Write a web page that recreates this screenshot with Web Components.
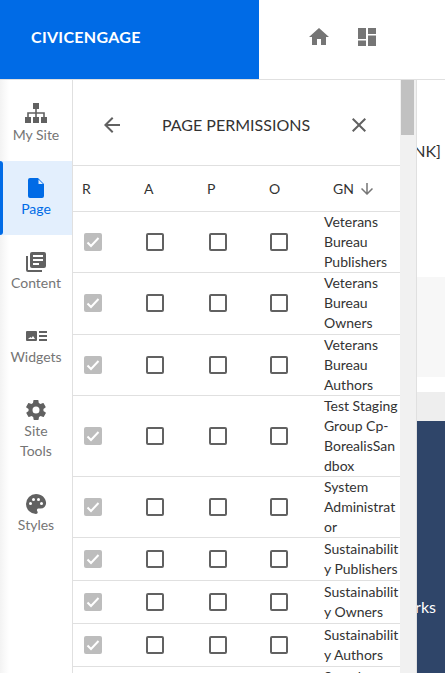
<!DOCTYPE html>
<html>
<head>
<meta charset="utf-8">
<style>
html,body{margin:0;height:100%;overflow:hidden;background:#fff}
body{font-family:"Lato","Open Sans",sans-serif;color:#333}
</style>
</head>
<body>
<app-shell>
  <top-bar slot="top"></top-bar>
  <side-nav slot="nav">
    <nav-item icon="sitemap">My Site</nav-item>
    <nav-item icon="page" active>Page</nav-item>
    <nav-item icon="content">Content</nav-item>
    <nav-item icon="widgets">Widgets</nav-item>
    <nav-item icon="tools">Site<br>Tools</nav-item>
    <nav-item icon="palette">Styles</nav-item>
  </side-nav>
  <permissions-panel slot="panel">
    <perm-row>Veterans<br>Bureau<br>Publishers</perm-row>
    <perm-row>Veterans<br>Bureau<br>Owners</perm-row>
    <perm-row>Veterans<br>Bureau<br>Authors</perm-row>
    <perm-row>Test Staging<br>Group Cp-<br>BorealisSan<br>dbox</perm-row>
    <perm-row>System<br>Administrat<br>or</perm-row>
    <perm-row>Sustainabilit<br>y Publishers</perm-row>
    <perm-row>Sustainabilit<br>y Owners</perm-row>
    <perm-row>Sustainabilit<br>y Authors</perm-row>
    <perm-row>Sample<br>Group<br>Owners</perm-row>
  </permissions-panel>
  <page-behind slot="behind"></page-behind>
</app-shell>
<script>
const ICONS = {
  sitemap:'<svg width="24" height="24" viewBox="0 0 24 24" fill="#616161"><path d="M9 1h6v6h-2.200v3.200H20.800V15H23v6h-6v-6h2.200v-3.300h-6.400V15H15v6H9v-6h2.200v-3.300H4.800V15H7v6H1v-6h2.200v-4.800h8V7H9z"/></svg>',
  page:'<svg width="24" height="24" viewBox="0 0 24 24"><path fill="#006be6" d="M6 2h8l6 6v12a2 2 0 0 1-2 2H6a2 2 0 0 1-2-2V4a2 2 0 0 1 2-2zm8.500 1.500V8h4.500z" fill-rule="evenodd"/></svg>',
  content:'<svg width="24" height="24" viewBox="0 0 24 24" fill="#616161"><path d="M4 6H2v14a2 2 0 0 0 2 2h14v-2H4V6zm16-4H8a2 2 0 0 0-2 2v12a2 2 0 0 0 2 2h12a2 2 0 0 0 2-2V4a2 2 0 0 0-2-2zm-1 9H9V9h10v2zm-4 4H9v-2h6v2zm4-8H9V5h10v2z"/></svg>',
  widgets:'<svg width="24" height="24" viewBox="0 0 24 24" fill="#616161"><path fill-rule="evenodd" d="M3 7h9a1 1 0 0 1 1 1v8a1 1 0 0 1-1 1H3a1 1 0 0 1-1-1V8a1 1 0 0 1 1-1zm1 8h7l-2-3-1.500 2-1-1zM15 7h8v2h-8zm0 4h8v2h-8zm0 4h8v2h-8z"/></svg>',
  tools:'<svg width="24" height="24" viewBox="0 0 24 24" fill="#616161"><path d="M19.400 13c.1-.3.1-.7.1-1s0-.7-.1-1l2.100-1.600c.2-.2.2-.4.1-.6l-2-3.500c-.1-.2-.4-.3-.6-.2l-2.500 1c-.5-.4-1.100-.7-1.700-1l-.4-2.700c0-.2-.2-.4-.5-.4h-4c-.2 0-.4.2-.5.400l-.4 2.700c-.6.300-1.100.6-1.700 1l-2.500-1c-.2-.1-.5 0-.6.2l-2 3.500c-.1.2-.1.500.1.600L4.600 11c0 .3-.1.700-.1 1s0 .7.100 1l-2.100 1.600c-.2.2-.2.4-.1.600l2 3.500c.1.2.4.3.6.2l2.500-1c.5.400 1.100.7 1.700 1l.4 2.600c0 .2.2.4.5.4h4c.3 0 .5-.2.5-.4l.4-2.600c.6-.3 1.200-.6 1.700-1l2.500 1c.2.100.5 0 .6-.2l2-3.500c.1-.2.1-.5-.1-.6zM12 15.500a3.500 3.500 0 1 1 0-7 3.500 3.500 0 0 1 0 7z"/></svg>',
  palette:'<svg width="24" height="24" viewBox="0 0 24 24" fill="#616161"><path fill-rule="evenodd" d="M12 2a10 10 0 0 0 0 20c.9 0 1.700-.7 1.700-1.700 0-.4-.2-.8-.4-1.100-.3-.3-.4-.7-.4-1.100 0-.9.700-1.600 1.700-1.600h2a5.500 5.500 0 0 0 5.500-5.500C22 5.900 17.500 2 12 2zM6.500 13a1.500 1.500 0 1 1 0-3 1.500 1.500 0 0 1 0 3zm3-4a1.500 1.500 0 1 1 0-3 1.500 1.500 0 0 1 0 3zm5 0a1.500 1.500 0 1 1 0-3 1.500 1.500 0 0 1 0 3zm3 4a1.500 1.500 0 1 1 0-3 1.500 1.500 0 0 1 0 3z"/></svg>'
};

function define(name, css, html) {
  customElements.define(name, class extends HTMLElement {
    constructor() {
      super();
      this.attachShadow({mode:'open'});
      this.shadowRoot.innerHTML = '<style>' + css + '</style>' + (typeof html === 'function' ? html(this) : html);
    }
  });
}

define('app-shell', `
  :host{display:grid;grid-template-columns:73px 344px 28px;grid-template-rows:80px 593px;width:445px;height:673px;overflow:hidden}
  .top{grid-column:1/4}
`, `
  <div class="top"><slot name="top"></slot></div>
  <slot name="nav"></slot><slot name="panel"></slot><slot name="behind"></slot>
`);

define('top-bar', `
  :host{display:flex;height:80px;box-sizing:border-box;border-bottom:1px solid #e0e0e0;background:#fff}
  .logo{width:259px;height:79px;background:#006be6;color:#fff;font:700 16px Lato,sans-serif;letter-spacing:.3px;display:flex;align-items:center;padding:0 0 7px 31px;box-sizing:border-box}
  .btns{display:flex;gap:24px;padding:0 0 5px 48px;align-items:center}
  svg{display:block}
`, `
  <div class="logo">CIVICENGAGE</div>
  <div class="btns">
    <svg width="24" height="24" viewBox="0 0 24 24" fill="#757575"><path d="M10 20v-6h4v6h5v-8h3L12 3 2 12h3v8z"/></svg>
    <svg width="24" height="24" viewBox="0 0 24 24" fill="#757575"><path d="M3 3h8v11H3zM3 15.500h8V21H3zM13 3h8v6h-8zM13 10.500h8V21h-8z"/></svg>
  </div>
`);

define('side-nav', `
  :host{display:flex;flex-direction:column;padding-top:7px;box-sizing:border-box;border-right:1px solid #e0e0e0;background:linear-gradient(90deg,#f3f3f3,#fff 9px)}
`, `<slot></slot>`);

define('nav-item', `
  :host{display:flex;flex-direction:column;align-items:center;box-sizing:border-box;padding:15px 0 16px;position:relative;color:#757575;font:14px/20px Lato,sans-serif;text-align:center}
  :host([active]){background:#e3effd;color:#006be6}
  :host([active])::before{content:"";position:absolute;left:0;top:0;bottom:0;width:3px;background:#006be6;border-radius:0 3px 3px 0}
  svg{display:block;margin-bottom:-1px}
`, el => ICONS[el.getAttribute('icon')] + '<div><slot></slot></div>');

define('permissions-panel', `
  :host{display:flex;box-sizing:border-box;border-right:1px solid #e0e0e0;height:593px;overflow:hidden;background:#fff}
  .main{width:327px;flex:none;height:593px;overflow:hidden}
  .head{height:85px;display:grid;grid-template-columns:78px 1fr 82px;align-items:center;border-bottom:1px solid #e0e0e0;font:16px Lato,sans-serif;color:#333}
  .head>*{position:relative;top:2px}
  .head svg{display:block;justify-self:center}
  .title{padding-left:11px}
  .cols{height:45.100px;display:grid;grid-template-columns:62px 63px 62px 64px 1fr;align-items:center;padding-left:9px;border-bottom:1px solid #e0e0e0;font:14px Lato,sans-serif;color:#333}
  .gn{display:flex;align-items:center;gap:4px}
  .track{flex:1;background:#f1f1f1;position:relative}
  .thumb{position:absolute;left:1px;right:2px;top:0;height:55px;background:#c1c1c1}
`, `
  <div class="main">
    <div class="head">
      <svg width="24" height="24" viewBox="0 0 24 24" fill="#616161"><path d="M20 11H7.830l5.590-5.590L12 4l-8 8 8 8 1.410-1.410L7.830 13H20z"/></svg>
      <div class="title">PAGE PERMISSIONS</div>
      <svg width="24" height="24" viewBox="0 0 24 24" fill="#616161"><path d="M19 6.410 17.590 5 12 10.590 6.410 5 5 6.410 10.590 12 5 17.590 6.410 19 12 13.410 17.590 19 19 17.590 13.410 12z"/></svg>
    </div>
    <div class="cols"><span>R</span><span>A</span><span>P</span><span>O</span>
      <span class="gn">GN <svg width="18" height="18" viewBox="0 0 24 24" fill="#757575"><path d="M20 12l-1.410-1.410L13 16.170V4h-2v12.170l-5.580-5.590L4 12l8 8z"/></svg></span></div>
    <slot></slot>
  </div>
  <div class="track"><div class="thumb"></div></div>
`);

define('perm-box', `
  :host{display:block;flex:none;width:18px;height:18px;box-sizing:border-box;border:2px solid #616161;border-radius:2px}
  :host([checked]){border:0;background:#bdbdbd}
  svg{display:block}
`, el => el.hasAttribute('checked') ? '<svg width="18" height="18" viewBox="0 0 18 18" fill="none" stroke="#fff" stroke-width="2"><path d="M3.500 9.500 7 13l7.500-8"/></svg>' : '');

define('perm-row', `
  :host{display:flex;align-items:center;min-height:42px;padding-left:11px;border-bottom:1px solid #e0e0e0;font:14px/20.080px Lato,sans-serif;color:#333}
  .a{margin-left:44px}
  .p{margin-left:45px}
  .o{margin-left:43px}
  .t{margin-left:36px;white-space:nowrap}
`, `
  <perm-box checked></perm-box>
  <perm-box class="a"></perm-box>
  <perm-box class="p"></perm-box>
  <perm-box class="o"></perm-box>
  <div class="t"><slot></slot></div>
`);

define('page-behind', `
  :host{display:flex;flex-direction:column;height:593px;overflow:hidden;font:16px Lato,sans-serif}
  .a{height:197px;background:#fff;color:#333;display:flex;justify-content:flex-end;padding:61px 4px 0 0;box-sizing:border-box}
  .b{height:100px;background:#f7f7f7}
  .c{height:15px;background:#fff}
  .d{height:29px;background:#eee}
  .e{flex:1;background:#2f4569;color:#fff;display:flex;justify-content:flex-end;padding:176px 9px 0 0;box-sizing:border-box}
`, `
  <div class="a">NK]</div><div class="b"></div><div class="c"></div><div class="d"></div><div class="e">rks</div>
`);
</script>
</body>
</html>
